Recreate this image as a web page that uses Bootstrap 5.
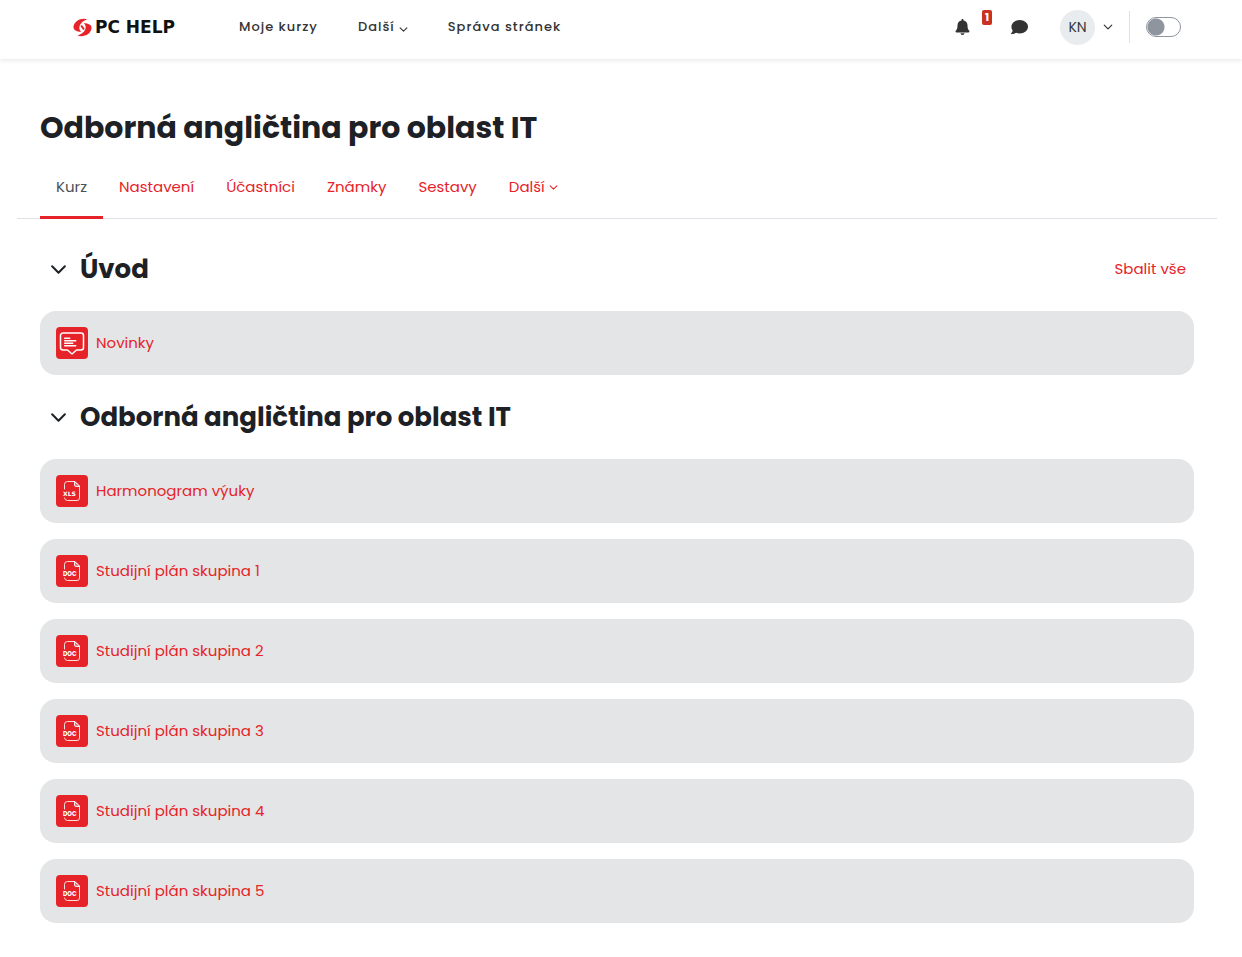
<!DOCTYPE html>
<html lang="cs">
<head>
<meta charset="utf-8">
<meta name="viewport" content="width=device-width, initial-scale=1">
<title>Odborná angličtina pro oblast IT</title>
<link href="https://cdn.jsdelivr.net/npm/bootstrap@5.3.0/dist/css/bootstrap.min.css" rel="stylesheet">
<style>
  :root { --brand: #e62329; --ink: #1d2125; }
  body { font-family: Poppins, Inter, sans-serif; font-size: 15px; color: var(--ink); background: #fff; }
  a { color: var(--brand); text-decoration: none; }
  a:hover { color: #b3161b; }
  .topbar { padding: 0 61px 5px 73px; box-shadow: 0 2px 4px rgba(0,0,0,.08); min-height: 59px; }
  .logo { width: 105px; gap: 3px; font: 700 17px/24px "DejaVu Sans", sans-serif; color: #111; white-space: nowrap; }
  .topnav { margin-left: 61px; gap: 40px; font-size: 13px; font-weight: 500; letter-spacing: 1px; }
  .topnav a, .tool { color: #333; }
  .tool { position: relative; padding: 0; border: 0; background: none; line-height: 1; }
  .tool-bell { margin-right: 41px; }
  .count { position: absolute; left: 27px; top: -9px; padding: 2px 3px; border-radius: 2px; background: #ca3120; color: #fff; font-size: 11px; line-height: 11px; font-weight: 700; }
  .user { gap: 8px; margin-left: 32px; }
  .avatar { width: 35px; height: 35px; background: #e9ecef; color: #343a40; font-size: 14px; }
  .split { width: 1px; height: 32px; background: #dee2e6; margin: 0 16px; }
  .form-check-input.mode { width: 35px; height: 20px; margin: 0; border: 1px solid #8f959e; border-radius: 10px;
    background: #fff radial-gradient(circle at 9px 9px, #8f959e 8px, transparent 9px) no-repeat; }
  .page { padding: 49px 48px 32px 40px; }
  .page h1 { font-size: 30px; line-height: 40px; font-weight: 700; margin-bottom: 12px; }
  .page h2 { font-size: 26px; line-height: 36px; font-weight: 700; }
  .tabs { margin: 0 -23px 8px; padding: 0 23px; border-bottom: 1px solid #dee2e6; }
  .tabs .nav-link { padding: 15px 16px 17px; margin-bottom: -1px; line-height: 24px; color: var(--brand); border-bottom: 3px solid transparent; }
  .tabs .nav-link.active { color: #495057; border-color: var(--brand); }
  .fold { width: 36px; margin-right: 4px; padding: 0; border: 0; background: none; color: var(--ink); }
  .activity { padding: 16px; border-radius: 16px; background: #e3e5e6; }
  .tile { width: 32px; height: 32px; border-radius: 4px; background: var(--brand); flex: none; }
  svg { display: block; flex: none; }
</style>
</head>
<body>
<svg width="0" height="0" class="position-absolute" aria-hidden="true">
  <symbol id="chev" viewBox="0 0 16 16"><path d="M2 5l6 6 6-6" fill="none" stroke="currentColor" stroke-width="1.900" stroke-linecap="round" stroke-linejoin="round"/></symbol>
  <symbol id="sheet" viewBox="0 0 32 32"><g fill="none" stroke="#fff" stroke-opacity=".85" stroke-width="1" stroke-linecap="round" stroke-linejoin="round"><path d="M8.500 14V9.500a3 3 0 0 1 3-3h7.500l4.500 4.500v12a2.500 2.500 0 0 1-2.500 2.500h-9.500A3 3 0 0 1 8.500 23"/><path d="M18.500 6.800V10a1.500 1.500 0 0 0 1.500 1.500h3.200z" fill="#fff" fill-opacity=".35"/></g></symbol>
</svg>

<header class="topbar d-flex align-items-center">
  <a href="#" class="logo d-flex align-items-center">
    <svg width="19" height="19" viewBox="0 0 19 19" aria-hidden="true"><g fill="#e62329"><path d="M14.500 1.200C8-.8 1.200 3 .5 8.500c-.4 3.600 2.800 5.300 7.600 5.300C6.200 12 5.800 9.500 7 7c1.200-2.600 4-4.600 7.500-5.800z"/><path d="M4.500 17.600c6.500 2 13.300-1.600 14-7.100.4-3.600-2.800-5.300-7.600-5.300 1.900 1.800 2.300 4.300 1.100 6.800-1.200 2.600-4 4.400-7.500 5.600z"/><path d="M8.200 7.500 11 11.500" stroke="#e62329" stroke-width="2"/></g></svg>
    <span>PC HELP</span>
  </a>
  <nav class="topnav d-flex align-items-center" aria-label="Hlavní">
    <a href="#">Moje kurzy</a>
    <a href="#" class="d-flex align-items-center gap-1">Další <svg class="mt-1" width="9" height="9"><use href="#chev"/></svg></a>
    <a href="#">Správa stránek</a>
  </nav>
  <div class="d-flex align-items-center ms-auto">
    <button type="button" class="tool tool-bell" aria-label="Oznámení">
      <svg width="15" height="16" viewBox="0 0 15 16" fill="currentColor"><path d="M7.500 0c.6 0 1 .4 1 1v.5c2.300.4 4 2.300 4 4.700 0 3 .6 4.400 1.600 5.400.7.700.3 1.900-.7 1.900H1.600c-1 0-1.400-1.200-.7-1.900 1-1 1.600-2.400 1.600-5.400 0-2.400 1.700-4.300 4-4.700V1c0-.6.4-1 1-1zM5.500 14.300h4a2 1.700 0 0 1-4 0z"/></svg>
      <span class="count">1</span>
    </button>
    <button type="button" class="tool" aria-label="Zprávy">
      <svg width="17" height="16" viewBox="0 0 17 16" fill="currentColor"><path d="M8.700 1C13.300 1 17 4 17 7.700s-3.700 6.700-8.300 6.700c-1.300 0-2.500-.2-3.600-.7-1.100.8-2.700 1.400-4.700 1.400-.4 0-.5-.4-.3-.7.700-.7 1.400-1.800 1.600-2.900A6.200 6.200 0 0 1 .4 7.700C.4 4 4.100 1 8.700 1z"/></svg>
    </button>
    <button type="button" class="tool user d-flex align-items-center" aria-label="Uživatelské menu">
      <span class="avatar rounded-circle d-flex align-items-center justify-content-center">KN</span>
      <svg width="10" height="10"><use href="#chev"/></svg>
    </button>
    <span class="split"></span>
    <input class="form-check-input mode" type="checkbox" role="switch" aria-label="Režim úprav">
  </div>
</header>

<main class="page">
  <h1>Odborná angličtina pro oblast IT</h1>
  <nav class="nav tabs" aria-label="Kurz">
    <a class="nav-link active" aria-current="page" href="#">Kurz</a>
    <a class="nav-link" href="#">Nastavení</a>
    <a class="nav-link" href="#">Účastníci</a>
    <a class="nav-link" href="#">Známky</a>
    <a class="nav-link" href="#">Sestavy</a>
    <a class="nav-link d-flex align-items-center gap-1" href="#">Další <svg width="9" height="9"><use href="#chev"/></svg></a>
  </nav>

  <section>
    <div class="d-flex align-items-center py-4">
      <button type="button" class="fold d-flex justify-content-center" aria-label="Sbalit Úvod"><svg width="17" height="17"><use href="#chev"/></svg></button>
      <h2 class="mb-0">Úvod</h2>
      <a href="#" class="ms-auto pe-2">Sbalit vše</a>
    </div>
    <div class="activity d-flex align-items-center gap-2">
      <span class="tile"><svg width="32" height="32" viewBox="0 0 32 32" fill="none" stroke="#fff" stroke-width="1.500" stroke-linecap="round" stroke-linejoin="round"><path d="M7 6h18a2.500 2.500 0 0 1 2.500 2.500v12A2.500 2.500 0 0 1 25 23h-4.500L16 27l-4.500-4H7a2.500 2.500 0 0 1-2.500-2.500v-12A2.500 2.500 0 0 1 7 6z"/><path d="M8.700 11.200h5M8.700 13.700h11M8.700 16.200h8M8.700 18.700h11"/></svg></span>
      <a href="#">Novinky</a>
    </div>
  </section>

  <section>
    <div class="d-flex align-items-center py-4">
      <button type="button" class="fold d-flex justify-content-center" aria-label="Sbalit Odborná angličtina pro oblast IT"><svg width="17" height="17"><use href="#chev"/></svg></button>
      <h2 class="mb-0">Odborná angličtina pro oblast IT</h2>
    </div>
    <div class="d-flex flex-column gap-3">
      <div class="activity d-flex align-items-center gap-2"><span class="tile"><svg width="32" height="32"><use href="#sheet"/><text x="7" y="21" fill="#fff" font-family="DejaVu Sans" font-weight="700" font-size="6">XLS</text></svg></span><a href="#">Harmonogram výuky</a></div>
      <div class="activity d-flex align-items-center gap-2"><span class="tile"><svg width="32" height="32"><use href="#sheet"/><text x="7" y="21" fill="#fff" font-family="Poppins, Inter" font-weight="700" font-size="6">DOC</text></svg></span><a href="#">Studijní plán skupina 1</a></div>
      <div class="activity d-flex align-items-center gap-2"><span class="tile"><svg width="32" height="32"><use href="#sheet"/><text x="7" y="21" fill="#fff" font-family="Poppins, Inter" font-weight="700" font-size="6">DOC</text></svg></span><a href="#">Studijní plán skupina 2</a></div>
      <div class="activity d-flex align-items-center gap-2"><span class="tile"><svg width="32" height="32"><use href="#sheet"/><text x="7" y="21" fill="#fff" font-family="Poppins, Inter" font-weight="700" font-size="6">DOC</text></svg></span><a href="#">Studijní plán skupina 3</a></div>
      <div class="activity d-flex align-items-center gap-2"><span class="tile"><svg width="32" height="32"><use href="#sheet"/><text x="7" y="21" fill="#fff" font-family="Poppins, Inter" font-weight="700" font-size="6">DOC</text></svg></span><a href="#">Studijní plán skupina 4</a></div>
      <div class="activity d-flex align-items-center gap-2"><span class="tile"><svg width="32" height="32"><use href="#sheet"/><text x="7" y="21" fill="#fff" font-family="Poppins, Inter" font-weight="700" font-size="6">DOC</text></svg></span><a href="#">Studijní plán skupina 5</a></div>
    </div>
  </section>
</main>
<script src="https://cdn.jsdelivr.net/npm/bootstrap@5.3.0/dist/js/bootstrap.bundle.min.js"></script>
</body>
</html>
